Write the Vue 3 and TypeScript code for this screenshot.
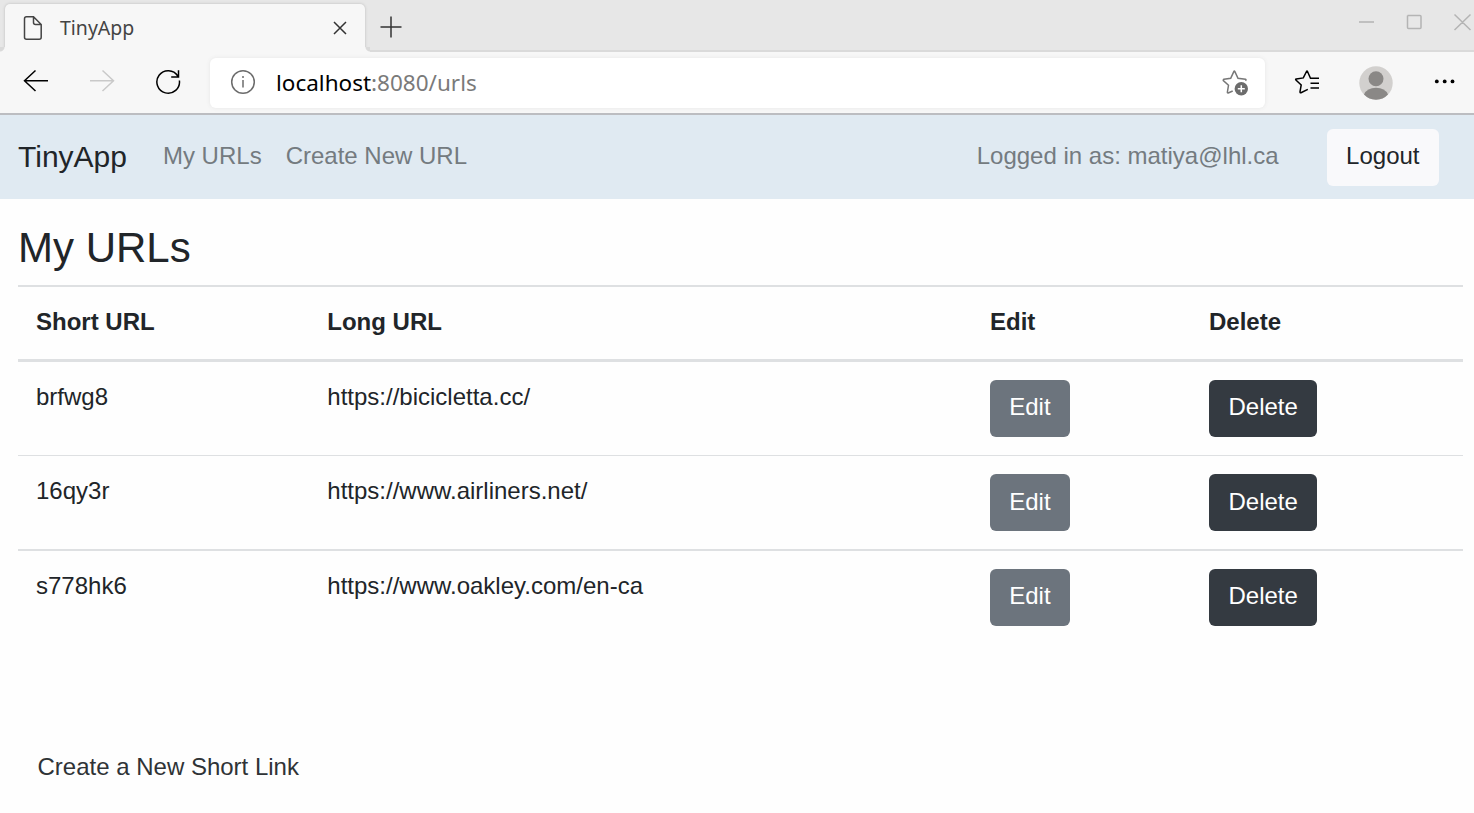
<script setup lang="ts">
interface ShortLink {
  id: string
  target: string
}

const links: ShortLink[] = [
  { id: 'brfwg8', target: 'https://bicicletta.cc/' },
  { id: '16qy3r', target: 'https://www.airliners.net/' },
  { id: 's778hk6', target: 'https://www.oakley.com/en-ca' },
]
const user = 'matiya@lhl.ca'
</script>

<template>
  <div class="window">
    <div class="titlebar">
      <div class="tab">
        <svg class="doc" width="20" height="26" viewBox="0 0 20 26">
          <path d="M3.500 1.800H10.500L18.200 9.500V22.300Q18.200 24.300 16.200 24.300H3.500Q1.500 24.300 1.500 22.300V3.800Q1.500 1.800 3.500 1.800ZM10.500 2V7.500Q10.500 9.500 12.500 9.500H18" />
        </svg>
        <span class="tab-title">TinyApp</span>
        <svg class="close" width="14" height="14" viewBox="0 0 14 14"><path d="M1 1L13 13M13 1L1 13" /></svg>
      </div>
      <svg class="plus" width="22" height="22" viewBox="0 0 22 22"><path d="M.5 11H21.5M11 .5V21.5" /></svg>
      <svg class="controls" width="116" height="20" viewBox="0 0 116 20">
        <path d="M1 10H16M49.500 3.500H62Q63 3.500 63 4.500V15.500Q63 16.500 62 16.500H50.500Q49.500 16.500 49.500 15.500V3.500M96.500 2.500L112.500 18M112.500 2.500L96.500 18" />
      </svg>
    </div>
    <div class="toolbar">
      <svg class="back" width="26" height="24" viewBox="0 0 26 24"><path d="M25 11.700H1.500M12.500 1.500L1.500 11.700L12.500 22" /></svg>
      <svg class="forward" width="26" height="24" viewBox="0 0 26 24"><path d="M1 11.700H24.500M13.500 1.500L24.500 11.700L13.500 22" /></svg>
      <svg class="reload" width="26" height="26" viewBox="0 0 26 26">
        <path d="M24.400 11.500A11.300 11.300 0 1 1 22.800 7M23.500 1.300V7.900H16.200" />
      </svg>
      <div class="address">
        <svg class="info" width="26" height="26" viewBox="0 0 26 26">
          <circle cx="13" cy="13" r="11.300" />
          <path d="M13 11V18.500M13 7V9" />
        </svg>
        <span class="url"><b>localhost</b>:8080/urls</span>
        <svg class="fav" width="28" height="28" viewBox="0 0 28 28">
          <path class="star" d="M10.700 22L6.200 24Q5.200 24.200 5.400 23L6.500 16.300L1.300 11.600Q1 10.600 2 10.300L8.700 9.300L11.800 2.600Q12.300 1.600 12.900 2.600L16 9.300L23.500 10.300Q24.500 10.600 23.500 11.700" />
          <circle cx="19.300" cy="19.800" r="6.700" />
          <path class="cross" d="M15.800 19.800H22.800M19.300 16.300V23.300" />
        </svg>
      </div>
      <svg class="favs" width="28" height="26" viewBox="0 0 28 26">
        <path d="M13.800 20.300L7 23.700Q5.900 24 6 22.800L7.200 16L1.900 11Q1.200 10.200 2.300 9.900L9.300 8.900L12.500 2.500Q13 1.700 13.500 2.500L16.500 9.200H25M16.500 14.200H25M16.500 19H25" />
      </svg>
      <svg class="avatar" width="34" height="34" viewBox="0 0 34 34">
        <circle cx="17" cy="17" r="16.700" fill="#d2d0ce" />
        <circle cx="17" cy="12.800" r="7.500" fill="#8a8886" />
        <path d="M5 28.500Q8 21.800 17 21.800T29 28.500Q24 33.700 17 33.700T5 28.500Z" fill="#8a8886" />
      </svg>
      <svg class="more" width="22" height="6" viewBox="0 0 22 6">
        <circle cx="2.800" cy="3.400" r="1.900" /><circle cx="10.700" cy="3.400" r="1.900" /><circle cx="18.500" cy="3.400" r="1.900" />
      </svg>
    </div>

    <nav class="navbar">
      <a class="brand">TinyApp</a>
      <a class="link">My URLs</a>
      <a class="link">Create New URL</a>
      <span class="account">Logged in as: {{ user }}</span>
      <button class="btn light">Logout</button>
    </nav>
    <main>
      <h3>My URLs</h3>
      <div class="table">
        <div class="row head">
          <span>Short URL</span><span>Long URL</span><span>Edit</span><span>Delete</span>
        </div>
        <div v-for="link in links" :key="link.id" class="row">
          <span>{{ link.id }}</span>
          <span>{{ link.target }}</span>
          <div><button class="btn edit">Edit</button></div>
          <div><button class="btn delete">Delete</button></div>
        </div>
      </div>
      <a class="create">Create a New Short Link</a>
    </main>
  </div>
</template>

<style>
body {
  margin: 0;
  overflow: hidden;
}
</style>

<style scoped>
.window {
  box-sizing: border-box;
  width: 1474px;
  height: 813px;
  overflow: hidden;
  background: #fefefe;
  color: #212529;
  font: 24px/36px 'Liberation Sans', Arial, sans-serif;
}
svg {
  display: block;
  flex: none;
  fill: none;
  stroke-width: 1.5;
}
.titlebar {
  display: flex;
  box-sizing: border-box;
  height: 52px;
  padding: 4px 0 0 5px;
  background: #e7e7e7;
  box-shadow: inset 0 -2px #dadada;
}
.tab {
  position: relative;
  display: flex;
  align-items: center;
  box-sizing: border-box;
  width: 360px;
  height: 48px;
  padding: 0 18px;
  border-radius: 5px 5px 0 0;
  background: #f7f7f7;
  box-shadow: 0 0 3px #bbb;
  clip-path: inset(-4px -6px 0 -5px);
}
.tab::before,
.tab::after {
  position: absolute;
  bottom: 0;
  width: 5px;
  height: 5px;
  content: '';
}
.tab::before {
  left: -5px;
  background: radial-gradient(circle at 0 0, #dadada 4px, #f7f7f7 5px);
}
.tab::after {
  right: -5px;
  background: radial-gradient(circle at 100% 0, #dadada 4px, #f7f7f7 5px);
}
.doc {
  stroke: #444;
}
.tab-title {
  margin-left: 17px;
  color: #444;
  font: 19.500px/28px 'Noto Sans', sans-serif;
}
.close {
  margin-left: auto;
  stroke: #333;
}
.plus {
  margin: 12px 0 0 15px;
  stroke: #333;
}
.controls {
  margin: 8px 0 0 auto;
  stroke: #b4b4b4;
}
.toolbar {
  display: flex;
  align-items: center;
  box-sizing: border-box;
  height: 63px;
  padding: 0 18px 0 23px;
  border-bottom: 2px solid #bcbdc1;
  background: #f7f7f7;
}
.back {
  margin-top: -3px;
  stroke: #000;
}
.forward {
  margin: -3px 0 0 40px;
  stroke: #c9c9c9;
}
.reload {
  margin: -2px 0 0 40px;
  stroke: #000;
}
.address {
  display: flex;
  align-items: center;
  box-sizing: border-box;
  width: 1055px;
  height: 50px;
  margin-left: 29px;
  padding: 0 15px 0 20px;
  border-radius: 6px;
  background: #fff;
  box-shadow: 0 0 4px #e6e6e6;
}
.info {
  margin-top: -2px;
  stroke: #6c6c6c;
}
.url {
  flex: 1;
  margin: 1px 0 0 20px;
  color: #7a7a7a;
  font: 22.500px/32px 'Noto Sans', sans-serif;
}
.url b {
  color: #000;
  font-weight: 400;
}
.fav circle {
  fill: #6c6c6c;
}
.fav .star {
  stroke: #777;
}
.fav .cross {
  stroke: #fff;
}
.favs {
  margin: -2px 0 0 29px;
  stroke: #000;
}
.avatar {
  margin-left: 37px;
}
.more {
  margin: -3px 0 0 41px;
  fill: #000;
}
.navbar {
  display: flex;
  align-items: center;
  box-sizing: border-box;
  height: 84px;
  padding: 0 35px 0 18px;
  background: #e0eaf2;
}
.brand {
  margin-right: 24px;
  font-size: 30px;
}
.link {
  padding: 0 12px;
}
.link,
.account {
  margin-top: -2px;
  color: #747b80;
}
.account {
  margin-left: auto;
  margin-right: 48px;
}
.btn {
  display: block;
  box-sizing: border-box;
  height: 57px;
  padding: 0 19.500px 3px;
  border: 0;
  border-radius: 6px;
  color: #fff;
  font: inherit;
}
.light {
  background: #f9f9fb;
  color: #212529;
}
.edit {
  padding-left: 19.250px;
  padding-right: 19.750px;
  background: #6c747d;
}
.delete {
  background: #343a41;
}
main {
  padding: 24px 11px 0 18px;
}
h3 {
  height: 62px;
  margin: 0;
  font-size: 42px;
  font-weight: 400;
  line-height: 50px;
}
.row {
  display: grid;
  grid-template-columns: 291.300px 662.700px 219px 1fr;
  box-sizing: border-box;
  height: 94px;
  padding: 17px 18px 0;
}
.row > div {
  padding-top: 1px;
}
.row:nth-child(3) {
  border-top: 1px solid #dee0e2;
}
.row:nth-child(3) .btn {
  padding-bottom: 1px;
}
.row:nth-child(4) {
  border-top: 2px solid #dee0e2;
}
.row:nth-child(2) {
  height: 93px;
}
.row.head {
  height: 77px;
  border-top: 2px solid #dee0e2;
  border-bottom: 3px solid #dee0e2;
  font-weight: 700;
}
.create {
  display: block;
  margin: 106px 0 0 19.500px;
  color: #2f3336;
}
</style>
